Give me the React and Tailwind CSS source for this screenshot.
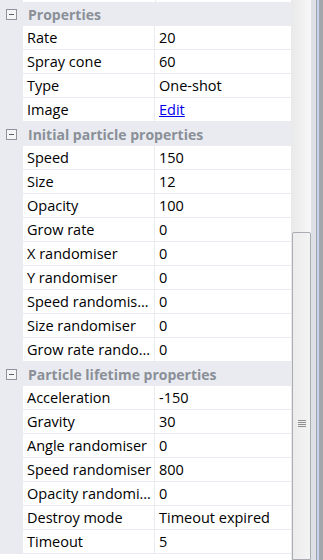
const sections = [
  {
    title: "Properties",
    rows: [
      ["Rate", "20"],
      ["Spray cone", "60"],
      ["Type", "One-shot"],
      ["Image", "Edit", true],
    ],
  },
  {
    title: "Initial particle properties",
    rows: [
      ["Speed", "150"],
      ["Size", "12"],
      ["Opacity", "100"],
      ["Grow rate", "0"],
      ["X randomiser", "0"],
      ["Y randomiser", "0"],
      ["Speed randomis…", "0"],
      ["Size randomiser", "0"],
      ["Grow rate rando…", "0"],
    ],
  },
  {
    title: "Particle lifetime properties",
    rows: [
      ["Acceleration", "-150"],
      ["Gravity", "30"],
      ["Angle randomiser", "0"],
      ["Speed randomiser", "800"],
      ["Opacity randomi…", "0"],
      ["Destroy mode", "Timeout expired"],
      ["Timeout", "5"],
    ],
  },
];

function Header({ title }) {
  return (
    <div className="flex items-center h-[24px] bg-[#e9ebf0] shrink-0">
      <div className="w-[23px] flex items-center justify-center">
        <div className="w-[11px] h-[11px] border border-[#8f949c] bg-[#f4f5f7] flex items-center justify-center ml-[-1px]">
          <div className="w-[5px] h-px bg-[#5a5f68]" />
        </div>
      </div>
      <span className="pl-[5px] text-[14px] font-bold text-[#8a8f98] whitespace-nowrap">{title}</span>
    </div>
  );
}

function Row({ name, value, link }) {
  return (
    <div className="flex h-[24px] shrink-0">
      <div className="w-[23px] bg-[#e9ebf0]" />
      <div className="flex flex-1 border-b border-[#e9ebf0] bg-white">
        <div className="w-[132px] pl-[4px] flex items-center overflow-hidden whitespace-nowrap border-r border-[#e9ebf0]">
          {name}
        </div>
        <div className="flex-1 pl-[4px] flex items-center whitespace-nowrap overflow-hidden">
          {link ? <span className="text-[#0000ee] underline">{value}</span> : value}
        </div>
      </div>
    </div>
  );
}

export default function App() {
  return (
    <div
      className="w-[323px] h-[560px] overflow-hidden flex bg-white text-[14.5px] text-black"
      style={{ fontFamily: '"Open Sans", "Noto Sans", sans-serif' }}
    >
      <div className="w-[291px] flex flex-col">
        <div className="flex h-[2px] shrink-0">
          <div className="w-[23px] bg-[#e9ebf0]" />
          <div className="flex flex-1">
            <div className="w-[133px] border-r border-[#e9ebf0]" />
          </div>
        </div>
        {sections.map((s) => (
          <div key={s.title} className="flex flex-col">
            <Header title={s.title} />
            {s.rows.map(([n, v, l]) => (
              <Row key={n} name={n} value={v} link={l} />
            ))}
          </div>
        ))}
      </div>

      <div className="w-[20px] flex flex-col bg-gradient-to-r from-[#e9e9e9] to-[#f7f7f7]">
        <div className="h-[232px] shrink-0" />
        <div className="flex-1 ml-px border border-[#a9adb3] rounded-t-[2px] bg-gradient-to-r from-[#ececec] to-[#f3f3f3] flex flex-col items-center pt-[187px]">
          <div className="flex flex-col gap-[1px] w-[8px]">
            <div className="h-px bg-[#8e8e8e]" />
            <div className="h-px bg-[#8e8e8e]" />
            <div className="h-px bg-[#8e8e8e]" />
            <div className="h-px bg-[#8e8e8e]" />
          </div>
        </div>
      </div>

      <div className="flex">
        <div className="w-[5px] bg-[#dde0e5]" />
        <div className="w-px bg-[#9ea3aa]" />
        <div className="w-[2px] bg-[#c5d3ee]" />
        <div className="w-[4px] bg-[#a3a6ab]" />
      </div>
    </div>
  );
}
